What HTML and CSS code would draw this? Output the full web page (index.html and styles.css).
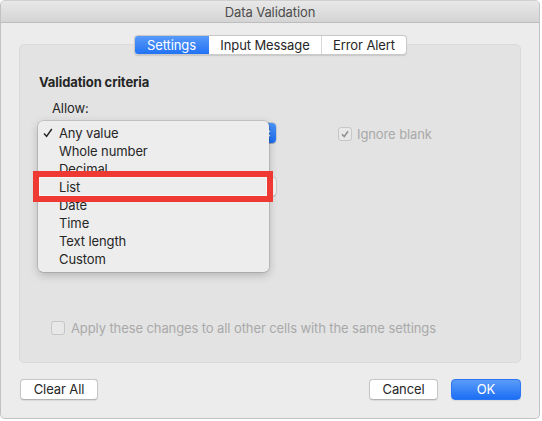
FILE: index.html
```html
<!DOCTYPE html>
<html>
<head>
<meta charset="utf-8">
<link rel="stylesheet" href="styles.css">
</head>
<body>
<div class="window">
  <div class="titlebar">Data Validation</div>
  <div class="content">
    <div class="tabs">
      <div class="tab tab-active tab-settings">Settings</div>
      <div class="tab tab-input">Input Message</div>
      <div class="tab tab-error">Error Alert</div>
    </div>
    <div class="group">
      <div class="heading">Validation criteria</div>
      <div class="criteria">
        <div class="field-label">Allow:</div>
        <div class="row">
          <div class="popup">
            <span class="popup-arrow">
              <svg width="7" height="11" viewBox="0 0 7 11"><path d="M1 4 L3.5 1.5 L6 4 M1 7 L3.5 9.5 L6 7" fill="none" stroke="#fff" stroke-width="1.3"/></svg>
            </span>
          </div>
          <label class="check-item disabled ignore">
            <span class="checkbox checked">
              <svg width="10" height="10" viewBox="0 0 10 10"><path d="M2 5.2 L4.2 7.6 L8 2.2" fill="none" stroke="#8f8f8f" stroke-width="1.6"/></svg>
            </span>
            <span>Ignore blank</span>
          </label>
        </div>
        <div class="popup popup-second"></div>
      </div>
      <label class="check-item disabled apply">
        <span class="checkbox"></span>
        <span>Apply these changes to all other cells with the same settings</span>
      </label>
    </div>
    <div class="buttons">
      <div class="btn btn-clear">Clear All</div>
      <div class="btn-spacer"></div>
      <div class="btn btn-cancel">Cancel</div>
      <div class="btn btn-ok">OK</div>
    </div>
  </div>

  <div class="menu">
    <div class="menu-item"><span class="mark"><svg width="10" height="10" viewBox="0 0 10 10"><path d="M1 5.5 L3.6 8.4 L8.8 1" fill="none" stroke="#262626" stroke-width="1.5"/></svg></span>Any value</div>
    <div class="menu-item"><span class="mark"></span>Whole number</div>
    <div class="menu-item"><span class="mark"></span>Decimal</div>
    <div class="menu-item"><span class="mark"></span>List</div>
    <div class="menu-item"><span class="mark"></span>Date</div>
    <div class="menu-item"><span class="mark"></span>Time</div>
    <div class="menu-item"><span class="mark"></span>Text length</div>
    <div class="menu-item"><span class="mark"></span>Custom</div>
  </div>
  <div class="highlight"></div>
</div>
</body>
</html>
```

FILE: styles.css
```css
html, body {
  margin: 0;
  padding: 0;
  background: #ffffff;
}

body {
  font-family: Inter, "Liberation Sans", Arial, sans-serif;
  font-size: 13px;
  letter-spacing: -0.1px;
  color: #262626;
}

.window {
  position: relative;
  width: 540px;
  height: 419px;
  box-sizing: border-box;
  border: 1px solid #c2c2c2;
  border-top-color: #d0d0d0;
  border-radius: 5px;
  overflow: hidden;
  background: #ececec;
  display: flex;
  flex-direction: column;
}

.titlebar {
  height: 21px;
  flex: none;
  border-bottom: 1px solid #bdbdbd;
  background: linear-gradient(#e8e8e8, #d4d4d4);
  color: #4c4c4c;
  text-align: center;
  line-height: 22px;
  font-size: 13px;
}

.content {
  flex: 1;
  display: flex;
  flex-direction: column;
  padding: 0 18px;
}

.tabs {
  position: relative;
  z-index: 1;
  align-self: center;
  display: flex;
  margin-top: 12px;
  height: 20px;
  box-sizing: border-box;
  border: 1px solid #c9c9c9;
  border-radius: 4px;
  background: #ffffff;
  box-shadow: 0 0.5px 1px rgba(0, 0, 0, 0.12);
  overflow: hidden;
  margin-left: 1px;
}

.tab {
  line-height: 18px;
  text-align: center;
  color: #262626;
  font-size: 13px;
}

.tab-settings { width: 75px; }
.tab-input { width: 112px; }
.tab-error { width: 84px; border-left: 1px solid #d8d8d8; }

.tab-active {
  background: linear-gradient(#5b9cf9, #1f70f5);
  color: #ffffff;
  margin: -1px 0 -1px -1px;
  line-height: 20px;
}

.group {
  margin-top: -11px;
  height: 319px;
  box-sizing: border-box;
  border: 1px solid #dadada;
  border-radius: 5px;
  background: #e3e3e3;
  padding: 29px 19px 26px 19px;
  display: flex;
  flex-direction: column;
}

.heading {
  font-weight: bold;
  line-height: 16px;
}

.criteria {
  padding-left: 12px;
  margin-top: 10px;
  display: flex;
  flex-direction: column;
}

.field-label {
  line-height: 16px;
  margin-left: 1px;
}

.row {
  display: flex;
  align-items: center;
  margin-top: 7px;
}

.popup {
  position: relative;
  width: 225px;
  height: 20px;
  box-sizing: border-box;
  background: #ffffff;
  border-radius: 4px;
  box-shadow: 0 0 0 0.5px rgba(0, 0, 0, 0.2), 0 0.5px 1px rgba(0, 0, 0, 0.2);
  display: flex;
  justify-content: flex-end;
}

.popup-arrow {
  width: 17px;
  height: 20px;
  border-radius: 0 4px 4px 0;
  background: linear-gradient(#4d94f8, #1c6ef5);
  display: flex;
  align-items: center;
  justify-content: center;
}

.popup-second {
  margin-top: 34px;
  height: 19px;
  background: #f4f4f4;
}

.check-item {
  display: flex;
  align-items: center;
  line-height: 16px;
}

.check-item.disabled {
  color: #a9a9a9;
}

.ignore {
  margin-left: 62px;
  margin-top: 2px;
}

.checkbox {
  width: 14px;
  height: 14px;
  box-sizing: border-box;
  border: 1px solid #c6c6c6;
  border-radius: 3px;
  background: #e8e8e8;
  margin-right: 5px;
  display: flex;
  align-items: center;
  justify-content: center;
}

.apply {
  margin-top: auto;
  margin-left: 12px;
}

.apply .checkbox {
  margin-right: 6px;
}

.buttons {
  display: flex;
  margin-top: 16px;
  height: 21px;
}

.btn {
  height: 21px;
  box-sizing: border-box;
  border: 1px solid #c6c6c6;
  border-bottom-color: #b3b3b3;
  border-radius: 4px;
  background: #ffffff;
  box-shadow: 0 0.5px 1px rgba(0, 0, 0, 0.08);
  text-align: center;
  line-height: 19px;
  color: #262626;
}

.btn-clear { width: 78px; margin-left: 1px; }
.btn-spacer { flex: 1; }
.btn-cancel { width: 69px; }
.btn-ok {
  width: 70px;
  margin-left: 13px;
  border-color: #2a76f3;
  background: linear-gradient(#5b9cf9, #1c6ef5);
  color: #ffffff;
}

.menu {
  position: absolute;
  left: 37px;
  top: 120px;
  width: 231px;
  height: 151px;
  box-sizing: border-box;
  padding-top: 3px;
  background: #ededed;
  border-radius: 5px;
  box-shadow: 0 0 0 0.5px rgba(0, 0, 0, 0.22), 0 3px 10px rgba(0, 0, 0, 0.22);
  z-index: 5;
}

.menu-item {
  display: flex;
  align-items: center;
  height: 18px;
  line-height: 18px;
  color: #262626;
}

.mark {
  width: 21px;
  padding-left: 5px;
  box-sizing: border-box;
  display: flex;
  align-items: center;
}

.highlight {
  position: absolute;
  left: 32px;
  top: 170px;
  width: 240px;
  height: 31px;
  box-sizing: border-box;
  border: 6px solid #ee3a33;
  box-shadow: inset 0 0 0 1px #f7f7f7;
  z-index: 6;
}
```
